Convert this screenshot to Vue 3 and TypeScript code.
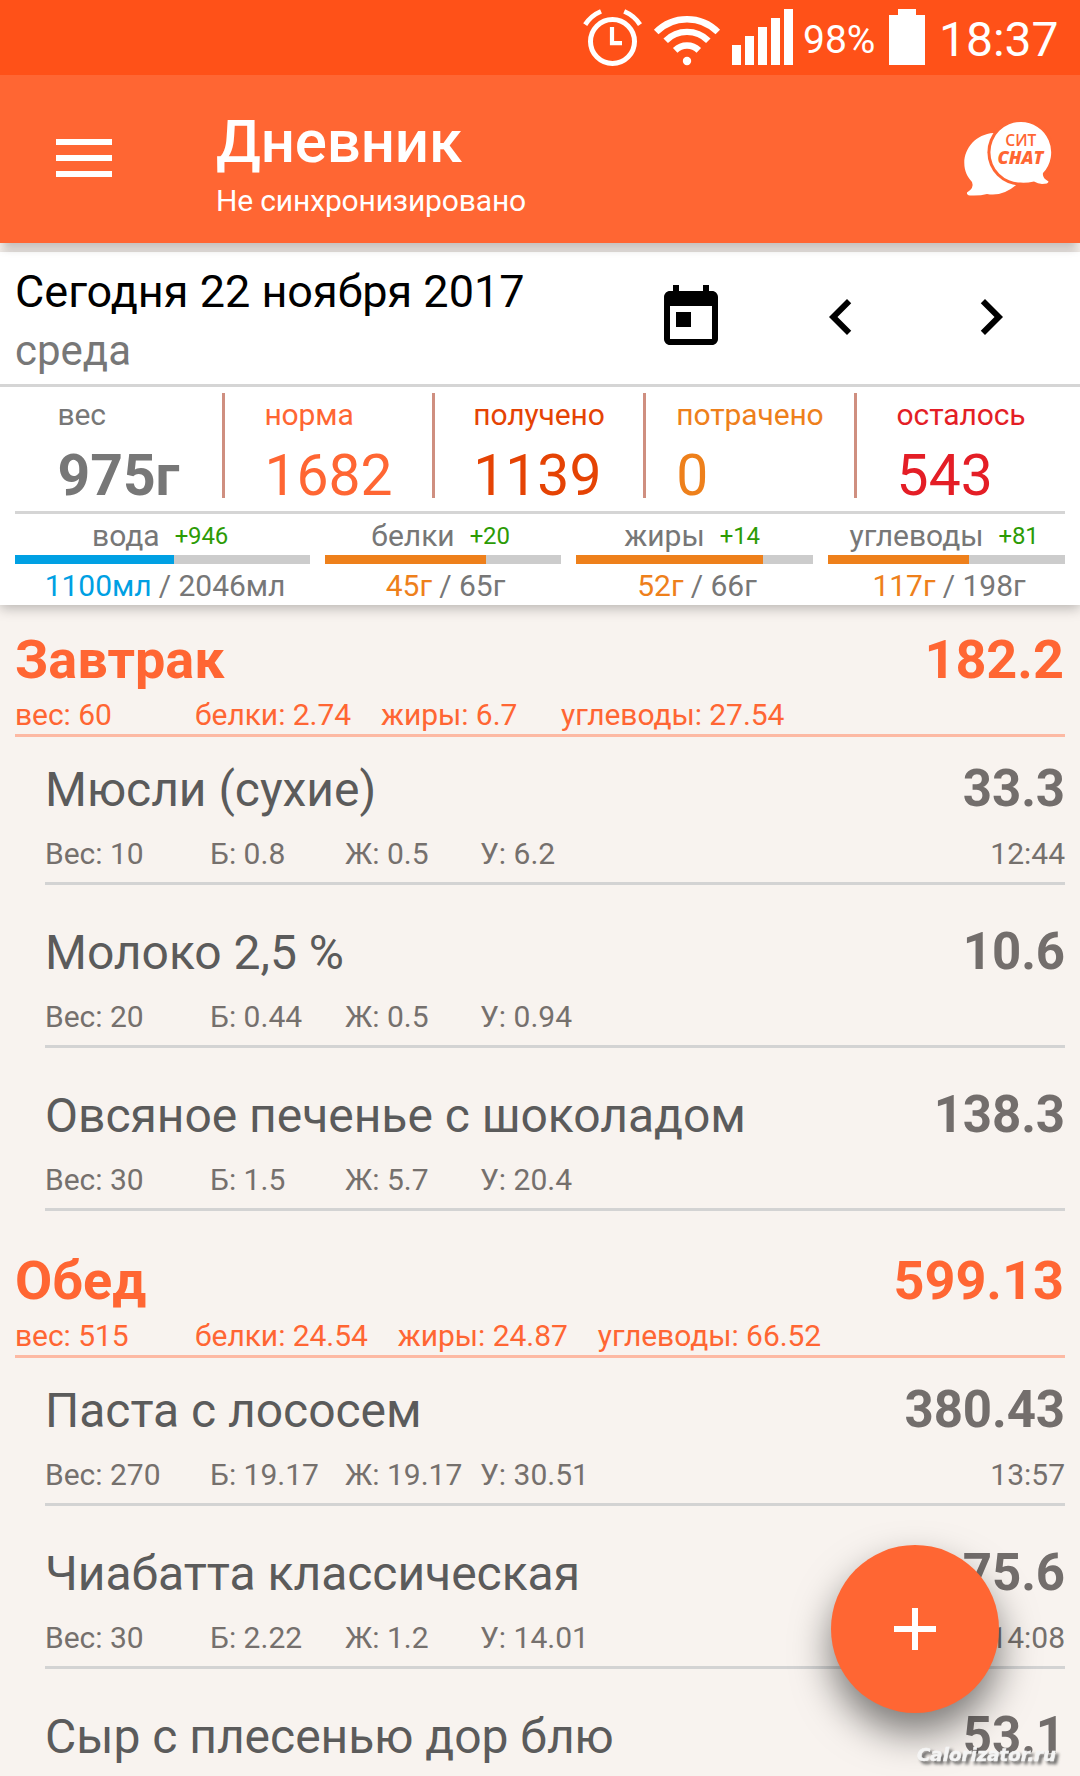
<script setup lang="ts">
interface Stat { label: string; value: string; tone: string }
interface Macro { label: string; delta: string; eaten: string; goal: string; fill: number; tone: string }
interface Food { name: string; kcal: string; details?: string[]; time?: string }
interface Meal { title: string; kcal: string; totals: string[]; foods: Food[] }

const stats: Stat[] = [
  { label: 'вес', value: '975г', tone: 'weight' },
  { label: 'норма', value: '1682', tone: 'norm' },
  { label: 'получено', value: '1139', tone: 'gained' },
  { label: 'потрачено', value: '0', tone: 'spent' },
  { label: 'осталось', value: '543', tone: 'left' },
]

const macros: Macro[] = [
  { label: 'вода', delta: '+946', eaten: '1100мл', goal: '2046мл', fill: 53.9, tone: 'water' },
  { label: 'белки', delta: '+20', eaten: '45г', goal: '65г', fill: 68.2, tone: 'nutrient' },
  { label: 'жиры', delta: '+14', eaten: '52г', goal: '66г', fill: 78.9, tone: 'nutrient' },
  { label: 'углеводы', delta: '+81', eaten: '117г', goal: '198г', fill: 59.5, tone: 'nutrient' },
]

const meals: Meal[] = [
  {
    title: 'Завтрак',
    kcal: '182.2',
    totals: ['вес: 60', 'белки: 2.74', 'жиры: 6.7', 'углеводы: 27.54'],
    foods: [
      { name: 'Мюсли (сухие)', kcal: '33.3', details: ['Вес: 10', 'Б: 0.8', 'Ж: 0.5', 'У: 6.2'], time: '12:44' },
      { name: 'Молоко 2,5 %', kcal: '10.6', details: ['Вес: 20', 'Б: 0.44', 'Ж: 0.5', 'У: 0.94'] },
      { name: 'Овсяное печенье с шоколадом', kcal: '138.3', details: ['Вес: 30', 'Б: 1.5', 'Ж: 5.7', 'У: 20.4'] },
    ],
  },
  {
    title: 'Обед',
    kcal: '599.13',
    totals: ['вес: 515', 'белки: 24.54', 'жиры: 24.87', 'углеводы: 66.52'],
    foods: [
      { name: 'Паста с лососем', kcal: '380.43', details: ['Вес: 270', 'Б: 19.17', 'Ж: 19.17', 'У: 30.51'], time: '13:57' },
      { name: 'Чиабатта классическая', kcal: '75.6', details: ['Вес: 30', 'Б: 2.22', 'Ж: 1.2', 'У: 14.01'], time: '14:08' },
      { name: 'Сыр с плесенью дор блю', kcal: '53.1' },
    ],
  },
]
</script>

<template>
  <div class="screen">
    <div class="status">
      <svg class="alarm" width="60" height="60" viewBox="0 0 60 60" fill="none" stroke="#fff">
        <circle cx="30.500" cy="33.500" r="22" stroke-width="5" />
        <path d="M30 19v16.200H40" stroke-width="4.200" />
        <path d="M3.200 16.600A35 35 0 0 1 19 3.400M42.200 3.400A35 35 0 0 1 58 16.600" stroke-width="4.800" />
      </svg>
      <svg class="wifi" width="68" height="60" viewBox="0 0 68 60" fill="none" stroke="#fff" stroke-width="6.400">
        <path d="M3.200 24A43.500 43.500 0 0 1 64.800 24" />
        <path d="M12.700 32.700A30.200 30.200 0 0 1 55.300 32.700" />
        <path d="M22.200 42.400A16.800 16.800 0 0 1 45.800 42.400" />
        <circle cx="34" cy="53" r="4.200" fill="#fff" stroke="none" />
      </svg>
      <svg class="signal" width="61" height="56" viewBox="0 0 61 56" fill="#fff" shape-rendering="crispEdges">
        <path d="M0 36h9v20H0zM13 27h9v29h-9zM26 18h9v38h-9zM39 9h9v47h-9zM52 0h9v56h-9z" />
      </svg>
      <span class="percent">98%</span>
      <svg class="battery" width="36" height="56" viewBox="0 0 36 56" fill="#fff" shape-rendering="crispEdges">
        <path d="M9 0h18v6h9v50H0V6h9z" />
      </svg>
      <span class="clock">18:37</span>
    </div>

    <header class="appbar">
      <svg class="menu" width="56" height="38" viewBox="0 0 56 38" fill="#fff">
        <path d="M0 0h56v6H0zM0 16h56v6H0zM0 32h56v6H0z" />
      </svg>
      <div class="heading">
        <h1>Дневник</h1>
        <p>Не синхронизировано</p>
      </div>
      <svg class="chat" width="90" height="78" viewBox="0 0 90 78">
        <path fill="#fff" d="M31.500 11.900C14 13 2.300 27 2.300 42C2.300 50 5.500 56 10 61Q12.500 67 5 71.500Q4.500 74 8 74.500Q18 75 25 73Q40 76 54.500 63.700Z" />
        <circle cx="58.700" cy="31.300" r="33.300" fill="#f63" />
        <path fill="#fff" d="M58.700 1A30.300 30.300 0 0 1 81 52Q80 57 86.500 60.500Q86.500 63 80 63Q76 62.500 72 60.500Q65 62 58.700 61.600A30.300 30.300 0 1 1 58.700 1Z" />
        <text x="43.300" y="24.800" class="chat-top" textLength="31" lengthAdjust="spacingAndGlyphs">СИТ</text>
        <text x="35.500" y="42.700" class="chat-bottom" textLength="46" lengthAdjust="spacingAndGlyphs">CHAT</text>
      </svg>
    </header>

    <section class="summary">
      <div class="day">
        <div class="date">
          <div class="date-main">Сегодня 22 ноября 2017</div>
          <div class="date-week">среда</div>
        </div>
        <svg class="today" width="72" height="72" viewBox="0 0 24 24">
          <path d="M19 3h-1V1h-2v2H8V1H6v2H5c-1.110 0-1.990.9-1.990 2L3 19c0 1.100.89 2 2 2h14c1.100 0 2-.9 2-2V5c0-1.100-.9-2-2-2zm0 16H5V8h14v11zM7 10h5v5H7z" />
        </svg>
        <svg class="prev" width="72" height="72" viewBox="0 0 24 24">
          <path d="M15.410 7.410L14 6l-6 6 6 6 1.410-1.410L10.830 12z" />
        </svg>
        <svg class="next" width="72" height="72" viewBox="0 0 24 24">
          <path d="M10 6L8.590 7.410 13.170 12l-4.580 4.590L10 18l6-6z" />
        </svg>
      </div>

      <div class="stats">
        <template v-for="(s, i) in stats" :key="s.label">
          <i v-if="i > 0" class="rule"></i>
          <div class="stat" :class="s.tone">
            <div class="stat-body">
              <span class="stat-label">{{ s.label }}</span>
              <span class="stat-value">{{ s.value }}</span>
            </div>
          </div>
        </template>
      </div>

      <div class="macros">
        <div v-for="m in macros" :key="m.label" class="macro" :class="m.tone">
          <div class="macro-top">
            <span>{{ m.label }}</span>
            <span class="delta">{{ m.delta }}</span>
          </div>
          <div class="track"><div class="fill" :style="{ width: m.fill + '%' }"></div></div>
          <div class="macro-bottom"><span class="eaten">{{ m.eaten }}</span> / {{ m.goal }}</div>
        </div>
      </div>
    </section>

    <main class="diary">
      <section v-for="meal in meals" :key="meal.title">
        <div class="meal-head">
          <div class="line">
            <h2>{{ meal.title }}</h2>
            <span class="meal-kcal">{{ meal.kcal }}</span>
          </div>
          <div class="totals">
            <span v-for="t in meal.totals" :key="t">{{ t }}</span>
          </div>
        </div>
        <article v-for="food in meal.foods" :key="food.name" class="food">
          <div class="line">
            <span class="food-name">{{ food.name }}</span>
            <span class="food-kcal">{{ food.kcal }}</span>
          </div>
          <div v-if="food.details" class="details">
            <span v-for="d in food.details" :key="d">{{ d }}</span>
            <time v-if="food.time">{{ food.time }}</time>
          </div>
        </article>
      </section>
    </main>

    <button class="fab" aria-label="+">
      <svg width="42" height="42" viewBox="0 0 42 42" fill="#fff"><path d="M18 0h6v18h18v6H24v18h-6V24H0v-6h18z" /></svg>
    </button>
    <svg class="watermark" width="150" height="30" viewBox="0 0 150 30">
      <text x="5" y="20" textLength="139" lengthAdjust="spacingAndGlyphs">Calorizator.ru</text>
    </svg>
  </div>
</template>

<style>
html, body { margin: 0; background: #f8f3ef; }
</style>

<style scoped>
.screen {
  position: relative;
  width: 1080px;
  height: 1776px;
  overflow: hidden;
  background: #f8f3ef;
  font-family: Roboto, "Noto Sans", sans-serif;
  display: flex;
  flex-direction: column;
}
h1, h2, p { margin: 0; }
svg { display: block; flex: none; }

.status {
  flex: none;
  height: 75px;
  background: #ff5118;
  color: #fff;
  display: flex;
  align-items: flex-start;
  box-sizing: border-box;
  padding: 8px 20px 0 582px;
}
.wifi { margin-left: 11px; }
.signal { margin: 1px 0 0 11px; }
.percent { width: 71px; margin-left: 10px; font-size: 39px; line-height: 46px; margin-top: 9px; white-space: nowrap; }
.battery { margin: 1px 0 0 15px; }
.clock { margin-left: 14px; font-size: 48px; line-height: 56px; margin-top: 4px; }

.appbar {
  position: relative;
  z-index: 2;
  flex: none;
  height: 168px;
  background: #f63;
  color: #fff;
  display: flex;
  box-shadow: 0 8px 9px -3px rgba(0, 0, 0, .22);
}
.menu { margin: 64px 0 0 56px; }
.heading { width: 748px; margin-left: 104px; padding-top: 32px; }
h1 { font-size: 60px; line-height: 70px; font-weight: 500; letter-spacing: -.15px; }
.heading p { margin-top: 6px; font-size: 30px; line-height: 36px; letter-spacing: -.15px; }
.chat { margin: 46px 0 0 -2px; }
.chat-top { fill: #f63; font: 600 16px "Open Sans", sans-serif; }
.chat-bottom { fill: #f63; font: italic 800 18px "Open Sans", sans-serif; }

.summary {
  position: relative;
  z-index: 1;
  flex: none;
  height: 353px;
  margin-top: 9px;
  background: #fff;
  box-shadow: 0 3px 12px rgba(0, 0, 0, .27);
}
.day {
  height: 132px;
  border-bottom: 3px solid #d5d5d5;
  display: flex;
  padding-left: 15px;
}
.date { width: 640px; padding-top: 13px; }
.date-main { font-size: 45px; line-height: 54px; color: #000; }
.date-week { margin-top: 8px; font-size: 42px; line-height: 48px; color: #777; }
.today { margin-top: 30px; }
.prev { margin: 28.500px 0 0 78px; }
.next { margin: 29px 0 0 78px; }

.stats {
  height: 124px;
  padding: 0 15px;
  display: grid;
  grid-template-columns: 207px 3px 207px 3px 208px 3px 208px 3px 208px;
}
.stat { display: flex; justify-content: center; }
.rule { width: 3px; height: 105px; margin-top: 6px; background: #cf8f80; }
.stat-body { display: flex; flex-direction: column; padding-top: 10px; }
.stat-label { font-size: 30px; line-height: 36px; letter-spacing: -.12px; }
.stat-value { margin-top: 10px; font-size: 57px; line-height: 66px; }
.weight { color: #777; }
.weight .stat-value { font-weight: 700; }
.norm { color: #f63; }
.gained { color: #e54304; }
.spent { color: #ee801b; }
.left { color: #e41e26; }

.macros {
  margin: 0 15px;
  border-top: 3px solid #d5d5d5;
  display: grid;
  grid-template-columns: 295px 236px 237px 237px;
  column-gap: 15px;
  color: #777;
  font-size: 30px;
  line-height: 36px;
}
.macro-top { height: 37px; padding: 4px 5px 0 0; display: flex; justify-content: center; gap: 15px; }
.delta { color: #2c9b05; font-size: 24px; letter-spacing: -.2px; }
.track { height: 9px; background: #ccc; }
.fill { height: 9px; background: #ee801b; }
.water .fill { background: #00a0e3; }
.macro-bottom { margin-top: 4px; padding-left: 5px; text-align: center; letter-spacing: -.06px; }
.eaten { color: #ee801b; }
.water .eaten { color: #00a0e3; }

.diary { flex: none; }
.line { display: flex; justify-content: space-between; white-space: nowrap; }
.meal-head {
  height: 106px;
  margin: 0 15px;
  padding-top: 23px;
  border-bottom: 3px solid #fdb9a3;
  color: #f63;
}
h2, .meal-kcal { font-size: 54px; line-height: 64px; font-weight: 700; }
.meal-kcal { margin-right: 1px; }
.totals { display: flex; margin-top: 5px; font-size: 30px; line-height: 36px; letter-spacing: -.05px; white-space: nowrap; }
.totals span { min-width: 150px; margin-right: 30px; }
.food {
  height: 120px;
  margin: 0 15px 15px 45px;
  padding-top: 25px;
  border-bottom: 3px solid #d3d3d3;
  color: #75706d;
}
.food-name { font-size: 48px; line-height: 56px; letter-spacing: -.03px; color: #5b5b5b; }
.food-kcal { margin-top: -1px; font-size: 51px; line-height: 56px; font-weight: 700; letter-spacing: -.1px; color: #736e6c; }
.details { display: flex; margin-top: 18px; font-size: 30px; line-height: 36px; }
.details span { width: 135px; white-space: nowrap; }
.details span:first-child { width: 165px; }
time { margin-left: auto; }

.fab {
  position: absolute;
  z-index: 3;
  left: 831px;
  top: 1545px;
  width: 168px;
  height: 168px;
  padding: 0;
  border: 0;
  border-radius: 50%;
  background: #f63;
  display: flex;
  align-items: center;
  justify-content: center;
  box-shadow: 0 20px 38px rgba(0, 0, 0, .5);
}
.watermark { position: absolute; z-index: 4; left: 912px; top: 1741px; overflow: visible; }
.watermark text {
  font: italic 700 18px "DejaVu Sans", sans-serif;
  fill: #f4f4f4;
  stroke: #f4f4f4;
  stroke-width: .5px;
  filter: drop-shadow(3px 3px 1.500px rgba(60, 60, 60, .75));
}
</style>
